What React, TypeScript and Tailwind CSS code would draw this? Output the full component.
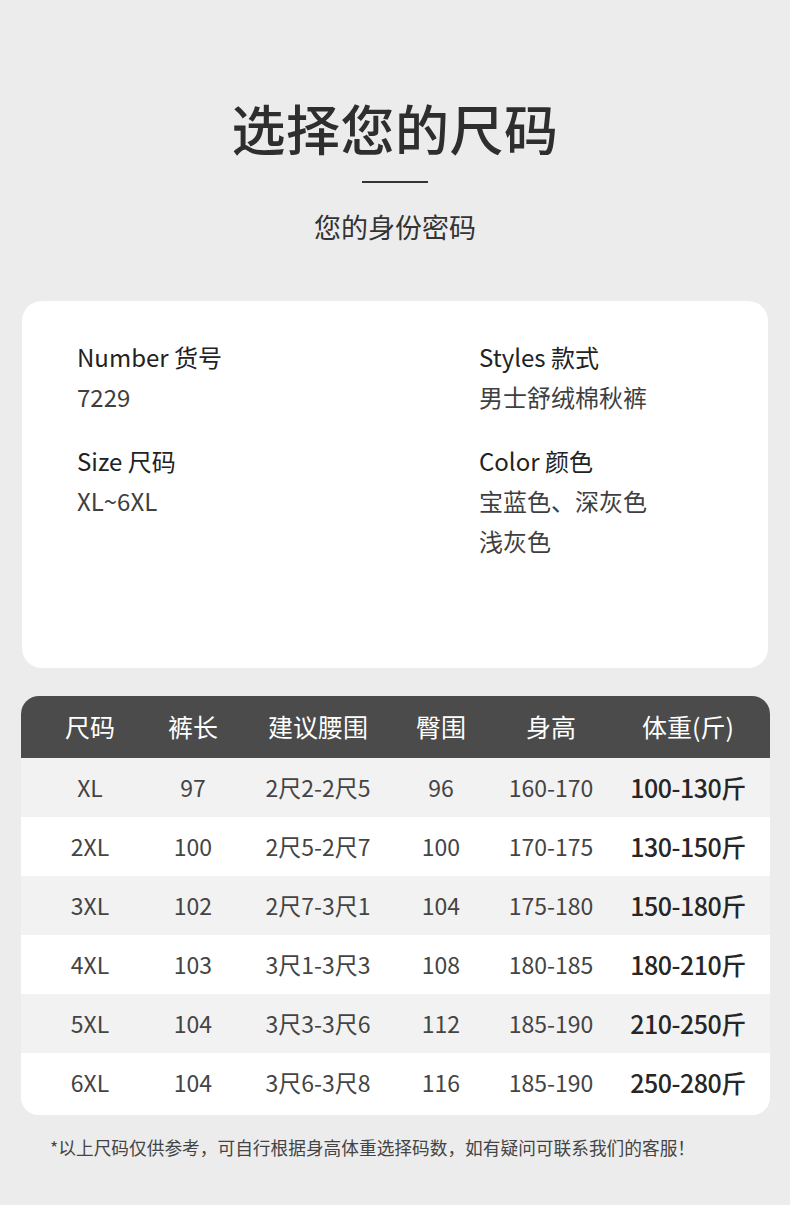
import React from 'react';

const rows = [
  ['XL', '97', '2尺2-2尺5', '96', '160-170', '100-130斤'],
  ['2XL', '100', '2尺5-2尺7', '100', '170-175', '130-150斤'],
  ['3XL', '102', '2尺7-3尺1', '104', '175-180', '150-180斤'],
  ['4XL', '103', '3尺1-3尺3', '108', '180-185', '180-210斤'],
  ['5XL', '104', '3尺3-3尺6', '112', '185-190', '210-250斤'],
  ['6XL', '104', '3尺6-3尺8', '116', '185-190', '250-280斤'],
];

const headers = ['尺码', '裤长', '建议腰围', '臀围', '身高', '体重(斤)'];

const cols = 'grid grid-cols-[138px_68px_182px_64px_156px_118px]';

const InfoItem: React.FC<{ label: string; lines: string[] }> = ({ label, lines }) => (
  <div className="flex flex-col">
    <div className="text-[24px] leading-[40px] text-[#222]">{label}</div>
    {lines.map(l => (
      <div key={l} className="text-[24px] leading-[40px] text-[#3f3f3f]">{l}</div>
    ))}
  </div>
);

export default function App() {
  return (
    <div
      className="w-[790px] h-[1205px] bg-[#ececec] flex flex-col items-center"
      style={{ fontFamily: '"Noto Sans CJK SC", "Noto Sans", sans-serif' }}
    >
      {/* Title */}
      <h1 className="mt-[90px] text-[54px] leading-[76px] font-medium text-[#2e2e2e] tracking-[0.5px]">选择您的尺码</h1>
      <div className="mt-[15px] w-[66px] h-[2px] bg-[#333]" />
      <div className="mt-[24px] text-[27px] leading-[40px] text-[#333]">您的身份密码</div>

      {/* Info card */}
      <div className="mt-[54px] w-[746px] h-[367px] self-start ml-[22px] bg-white rounded-[20px] grid grid-cols-[402px_1fr] pl-[55px] pt-[36px]">
        <div className="flex flex-col gap-[24px]">
          <InfoItem label="Number 货号" lines={['7229']} />
          <InfoItem label="Size 尺码" lines={['XL~6XL']} />
        </div>
        <div className="flex flex-col gap-[24px]">
          <InfoItem label="Styles 款式" lines={['男士舒绒棉秋裤']} />
          <InfoItem label="Color 颜色" lines={['宝蓝色、深灰色', '浅灰色']} />
        </div>
      </div>

      {/* Size table */}
      <div className="mt-[28px] w-[749px] self-start ml-[21px] rounded-[18px] overflow-hidden bg-white">
        <div className={`${cols} h-[62px] items-center bg-[#4b4b4b] text-white text-[25px]`}>
          {headers.map(h => (
            <div key={h} className="text-center whitespace-nowrap">{h}</div>
          ))}
        </div>
        {rows.map((r, i) => (
          <div
            key={r[0]}
            className={`${cols} items-center ${i === rows.length - 1 ? 'h-[62px] pb-[3px]' : 'h-[59px]'} ${i % 2 === 0 ? 'bg-[#f2f2f2]' : 'bg-white'}`}
          >
            {r.map((c, j) => (
              <div
                key={j}
                className={
                  j === 5
                    ? 'flex justify-center whitespace-nowrap text-[25px] font-medium text-[#262626] tracking-[-0.5px]'
                    : 'text-center whitespace-nowrap text-[23px] text-[#444]'
                }
              >
                {c}
              </div>
            ))}
          </div>
        ))}
      </div>

      {/* Note */}
      <div className="mt-[19px] self-start ml-[50px] text-[17.7px] leading-[26px] text-[#444]">
        *以上尺码仅供参考，可自行根据身高体重选择码数，如有疑问可联系我们的客服！
      </div>
    </div>
  );
}
